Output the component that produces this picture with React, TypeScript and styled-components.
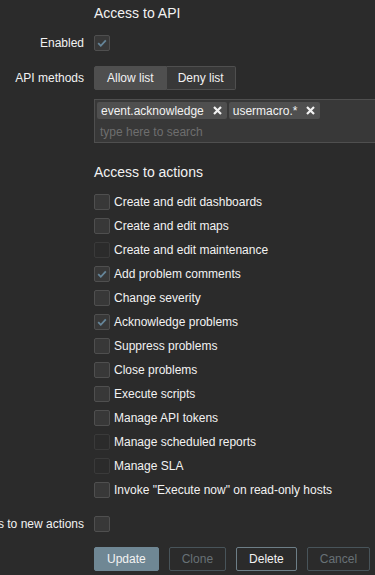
import React from 'react'
import styled, { createGlobalStyle } from 'styled-components'

const GlobalStyle = createGlobalStyle`
  html, body {
    margin: 0;
    padding: 0;
    background: #2b2b2b;
    overflow: hidden;
  }
  body {
    font-family: "Liberation Sans", Arial, sans-serif;
    font-size: 12px;
    color: #f2f2f2;
  }
`

type Action = { label: string; checked?: boolean; disabled?: boolean }

const actions: Action[] = [
  { label: 'Create and edit dashboards' },
  { label: 'Create and edit maps' },
  { label: 'Create and edit maintenance', disabled: true },
  { label: 'Add problem comments', checked: true },
  { label: 'Change severity' },
  { label: 'Acknowledge problems', checked: true },
  { label: 'Suppress problems' },
  { label: 'Close problems' },
  { label: 'Execute scripts' },
  { label: 'Manage API tokens' },
  { label: 'Manage scheduled reports', disabled: true },
  { label: 'Manage SLA', disabled: true },
  { label: 'Invoke "Execute now" on read-only hosts' },
]

function CheckMark() {
  return (
    <svg width="12" height="12" viewBox="0 0 12 12">
      <path d="M2.2 6.2 L4.8 8.8 L9.8 3.4" fill="none" stroke="#66869a" strokeWidth="1.8" />
    </svg>
  )
}

function Checkbox({ checked, disabled }: { checked?: boolean; disabled?: boolean }) {
  return <Box $disabled={disabled && !checked}>{checked && <CheckMark />}</Box>
}

function RemoveIcon() {
  return (
    <svg width="9" height="9" viewBox="0 0 9 9">
      <path d="M1 1 L8 8 M8 1 L1 8" stroke="#f2f2f2" strokeWidth="2.2" />
    </svg>
  )
}

export default function App() {
  return (
    <>
      <GlobalStyle />
      <Form>
        <Row $mt={4}>
          <span />
          <Title>Access to API</Title>
        </Row>
        <Row $mt={9}>
          <Label>Enabled</Label>
          <Field>
            <Checkbox checked disabled />
          </Field>
        </Row>
        <Row $mt={11}>
          <Label>API methods</Label>
          <Field>
            <Segmented>
              <SegButton $active>Allow list</SegButton>
              <SegButton>Deny list</SegButton>
            </Segmented>
          </Field>
        </Row>
        <Row $mt={9}>
          <span />
          <MultiSelect>
            <Tags>
              <Tag>
                event.acknowledge
                <RemoveIcon />
              </Tag>
              <Tag>
                usermacro.*
                <RemoveIcon />
              </Tag>
            </Tags>
            <Placeholder>type here to search</Placeholder>
          </MultiSelect>
        </Row>
        <Row $mt={20}>
          <span />
          <Title>Access to actions</Title>
        </Row>
        <Row $mt={9}>
          <span />
          <CheckList>
            {actions.map(a => (
              <CheckRow key={a.label}>
                <Checkbox checked={a.checked} disabled={a.disabled} />
                <span>{a.label}</span>
              </CheckRow>
            ))}
          </CheckList>
        </Row>
        <Row $mt={10}>
          <Label>Default access to new actions</Label>
          <Field>
            <Checkbox />
          </Field>
        </Row>
        <Row $mt={11}>
          <span />
          <Buttons>
            <Button $variant="primary">Update</Button>
            <Button $variant="disabled">Clone</Button>
            <Button $variant="alt">Delete</Button>
            <Button $variant="disabled">Cancel</Button>
          </Buttons>
        </Row>
      </Form>
    </>
  )
}

const Form = styled.div`
  display: flex;
  flex-direction: column;
  width: 560px;
`

const Row = styled.div<{ $mt: number }>`
  display: grid;
  grid-template-columns: 84px 1fr;
  column-gap: 10px;
  align-items: center;
  margin-top: ${p => p.$mt}px;
`

const Label = styled.div`
  display: flex;
  justify-content: flex-end;
  white-space: nowrap;
  line-height: 24px;
`

const Field = styled.div`
  display: flex;
  align-items: center;
  min-height: 24px;
`

const Title = styled.h4`
  margin: 0;
  font-size: 14px;
  font-weight: normal;
  line-height: 18px;
  color: #f2f2f2;
`

const Box = styled.span<{ $disabled?: boolean }>`
  box-sizing: border-box;
  width: 16px;
  height: 16px;
  flex: none;
  display: flex;
  align-items: center;
  justify-content: center;
  border-radius: 2px;
  background: ${p => (p.$disabled ? '#2b2b2b' : '#383838')};
  border: 1px solid ${p => (p.$disabled ? '#3a3a3a' : '#4f4f4f')};
`

const Segmented = styled.div`
  display: flex;
  height: 24px;
`

const SegButton = styled.div<{ $active?: boolean }>`
  box-sizing: border-box;
  display: flex;
  align-items: center;
  padding: 0 12px;
  border: 1px solid #4f4f4f;
  background: ${p => (p.$active ? '#4f4f4f' : '#383838')};
  color: #f2f2f2;
  &:first-child {
    border-radius: 2px 0 0 2px;
  }
  &:last-child {
    border-left: none;
    padding: 0 11px;
    border-radius: 0 2px 2px 0;
  }
`

const MultiSelect = styled.div`
  box-sizing: border-box;
  width: 453px;
  height: 44px;
  background: #383838;
  border: 1px solid #4f4f4f;
  padding: 2px 2px 0;
`

const Tags = styled.div`
  display: flex;
  gap: 2px;
`

const Tag = styled.span`
  display: flex;
  align-items: center;
  gap: 9px;
  height: 17px;
  padding: 0 5px 0 4px;
  background: #4f4f4f;
  border-radius: 2px;
  white-space: nowrap;
`

const Placeholder = styled.div`
  padding-left: 3px;
  margin-top: 4px;
  line-height: 18px;
  color: #6e6e6e;
`

const CheckList = styled.div`
  display: flex;
  flex-direction: column;
`

const CheckRow = styled.label`
  display: flex;
  align-items: center;
  gap: 4px;
  height: 24px;
  white-space: nowrap;
`

const Buttons = styled.div`
  display: flex;
  gap: 10px;
`

const Button = styled.button<{ $variant: 'primary' | 'alt' | 'disabled' }>`
  box-sizing: border-box;
  height: 24px;
  padding: 0 12px;
  font-family: "Liberation Sans", Arial, sans-serif;
  font-size: 12px;
  border-radius: 2px;
  border: 1px solid
    ${p => (p.$variant === 'primary' ? '#6f8794' : p.$variant === 'alt' ? '#6d7e87' : '#48545a')};
  background: ${p => (p.$variant === 'primary' ? '#6f8794' : 'transparent')};
  color: ${p => (p.$variant === 'disabled' ? '#687176' : '#f2f2f2')};
`
